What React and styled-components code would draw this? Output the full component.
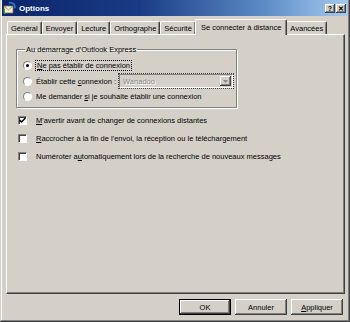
import React from 'react';
import styled, { createGlobalStyle } from 'styled-components';

const GlobalStyle = createGlobalStyle`
  html, body {
    margin: 0;
    padding: 0;
    background: #d4d0c8;
  }
  body {
    font-family: "Liberation Sans", Arial, sans-serif;
    font-size: 7.5px;
    color: #000;
  }
`;

const Window = styled.div`
  width: 350px;
  height: 322px;
  box-sizing: border-box;
  padding: 0 2px 2px 2px;
  background: #d4d0c8;
  display: flex;
  flex-direction: column;
  box-shadow: inset -1px -1px 0 #404040, inset 1px 0 0 #d4d0c8,
    inset -2px -2px 0 #808080, inset 2px 0 0 #fff;
`;

const TitleBar = styled.div`
  height: 16px;
  display: flex;
  align-items: center;
  padding: 0 2px 0 1px;
  background: linear-gradient(90deg, #0a246a 0%, #1a3c86 40%, #5a8ac4 75%, #a6caf0 100%);
  color: #fff;
`;

const TitleText = styled.span`
  font-weight: bold;
  font-size: 8px;
  margin-left: 3px;
  flex: 1;
`;

const CaptionButton = styled.div`
  width: 10px;
  height: 9px;
  margin-left: ${(p) => (p.$gap ? '1px' : '0')};
  background: #d4d0c8;
  box-shadow: inset -1px -1px 0 #404040, inset 1px 1px 0 #fff,
    inset -2px -2px 0 #808080;
  color: #000;
  font-weight: bold;
  font-size: 7px;
  line-height: 9px;
  text-align: center;
`;

const Body = styled.div`
  flex: 1;
  display: flex;
  flex-direction: column;
  padding: 3px 3px 0 4px;
`;

const TabRow = styled.div`
  display: flex;
  align-items: flex-end;
  height: 15px;
  padding-left: 1px;
`;

const Tab = styled.div`
  position: relative;
  z-index: ${(p) => (p.$active ? 2 : 1)};
  height: ${(p) => (p.$active ? '16px' : '13px')};
  margin: ${(p) => (p.$active ? '0 -1px -1px -1px' : '0')};
  padding: 0 ${(p) => (p.$active ? '5px' : '3px')};
  box-sizing: border-box;
  display: flex;
  align-items: center;
  background: #d4d0c8;
  border-top: 1px solid #fff;
  border-left: 1px solid #fff;
  border-right: 1px solid #404040;
  box-shadow: inset -1px 0 0 #808080;
  border-radius: 2px 2px 0 0;
  white-space: nowrap;
`;

const Panel = styled.div`
  height: 260px;
  box-sizing: border-box;
  border-top: 1px solid #fff;
  border-left: 1px solid #fff;
  border-right: 1px solid #404040;
  border-bottom: 1px solid #404040;
  box-shadow: inset -1px -1px 0 #808080;
  padding: 10px 0 0 9px;
`;

const GroupBox = styled.fieldset`
  width: 221px;
  height: 63px;
  box-sizing: border-box;
  margin: 0;
  padding: 3px 0 0 6px;
  border: 1px solid #808080;
  box-shadow: 1px 1px 0 #fff, inset 1px 1px 0 #fff;
`;

const Legend = styled.legend`
  padding: 0 1px;
  margin-left: 2px;
  line-height: 9px;
`;

const OptionRow = styled.div`
  display: flex;
  align-items: center;
  height: ${(p) => p.$h || 15}px;
  white-space: nowrap;
`;

const Radio = styled.div`
  width: 9px;
  height: 9px;
  border-radius: 50%;
  background: #fff;
  flex: none;
  box-sizing: border-box;
  border: 1px solid;
  border-color: #808080 #fff #fff #808080;
  display: flex;
  align-items: center;
  justify-content: center;
  margin-right: 4px;
  &::after {
    content: '';
    width: 3px;
    height: 3px;
    border-radius: 50%;
    background: ${(p) => (p.$checked ? '#000' : 'transparent')};
  }
`;

const Check = styled.div`
  width: 9px;
  height: 9px;
  flex: none;
  background: #fff;
  box-sizing: border-box;
  border: 1px solid;
  border-color: #808080 #fff #fff #808080;
  box-shadow: inset 1px 1px 0 #404040;
  margin-right: 9px;
  display: flex;
  align-items: center;
  justify-content: center;
`;

const Focus = styled.span`
  outline: 1px dotted #000;
  outline-offset: 0;
  padding: 0 1px;
`;

const Combo = styled.div`
  width: 114px;
  height: 14px;
  box-sizing: border-box;
  margin-left: 3px;
  display: flex;
  align-items: center;
  background: #d4d0c8;
  border: 1px solid;
  border-color: #808080 #fff #fff #808080;
  outline: 1px dotted #404040;
  color: #8c8a84;
  padding-left: 3px;
`;

const ComboValue = styled.span`
  flex: 1;
  text-shadow: 1px 1px 0 #fff;
`;

const ComboButton = styled.div`
  width: 11px;
  height: 10px;
  margin-right: 1px;
  background: #d4d0c8;
  box-shadow: inset -1px -1px 0 #404040, inset 1px 1px 0 #fff,
    inset -2px -2px 0 #808080;
  display: flex;
  align-items: center;
  justify-content: center;
`;

const Checks = styled.div`
  display: flex;
  flex-direction: column;
  margin-top: 3px;
  padding-left: 2px;
`;

const ButtonRow = styled.div`
  display: flex;
  justify-content: flex-end;
  gap: 4px;
  margin-top: 5px;
  padding-right: 2px;
`;

const Button = styled.div`
  width: 52px;
  height: 16px;
  box-sizing: border-box;
  display: flex;
  align-items: center;
  justify-content: center;
  background: #d4d0c8;
  border: ${(p) => (p.$default ? '1px solid #000' : 'none')};
  box-shadow: inset -1px -1px 0 #404040, inset 1px 1px 0 #fff,
    inset -2px -2px 0 #808080;
`;

const U = styled.u`
  text-decoration: underline;
`;

const OutlookIcon = () => (
  <svg width="13" height="13" viewBox="0 0 13 13">
    <rect x="1" y="4" width="9" height="7" fill="#f4f0d8" stroke="#807850" strokeWidth="0.8" />
    <path d="M1 4 L5.5 8 L10 4" fill="none" stroke="#807850" strokeWidth="0.8" />
    <path d="M6 1 C9 0 12 2 12 5" fill="none" stroke="#3070d0" strokeWidth="1.6" />
    <path d="M10.5 5 L12 7 L13 4.5 Z" fill="#3070d0" />
    <path d="M2 12 C1 10 1 8 2 7" fill="none" stroke="#40a040" strokeWidth="1.2" />
  </svg>
);

const CheckMark = () => (
  <svg width="7" height="7" viewBox="0 0 7 7">
    <path d="M0.5 3 L2.5 5 L6.5 1" fill="none" stroke="#000" strokeWidth="1.5" />
  </svg>
);

const tabs = [
  'Général',
  'Envoyer',
  'Lecture',
  'Orthographe',
  'Sécurité',
  'Se connecter à distance',
  'Avancées',
];

export default function App() {
  return (
    <>
      <GlobalStyle />
      <Window>
        <TitleBar>
          <OutlookIcon />
          <TitleText>Options</TitleText>
          <CaptionButton>?</CaptionButton>
          <CaptionButton $gap>✕</CaptionButton>
        </TitleBar>
        <Body>
          <TabRow>
            {tabs.map((t) => (
              <Tab key={t} $active={t === 'Se connecter à distance'}>
                {t}
              </Tab>
            ))}
          </TabRow>
          <Panel>
            <GroupBox>
              <Legend>Au démarrage d'Outlook Express</Legend>
              <OptionRow $h={16}>
                <Radio $checked />
                <Focus>
                  <U>N</U>e pas établir de connexion
                </Focus>
              </OptionRow>
              <OptionRow $h={16}>
                <Radio />
                <span>
                  Établir cette <U>c</U>onnexion :
                </span>
                <Combo>
                  <ComboValue>Wanadoo</ComboValue>
                  <ComboButton>
                    <svg width="5" height="3" viewBox="0 0 5 3">
                      <path d="M0 0 H5 L2.5 3 Z" fill="#8c8a84" />
                    </svg>
                  </ComboButton>
                </Combo>
              </OptionRow>
              <OptionRow $h={14}>
                <Radio />
                <span>
                  Me demander <U>s</U>i je souhaite établir une connexion
                </span>
              </OptionRow>
            </GroupBox>
            <Checks>
              <OptionRow $h={18}>
                <Check>
                  <CheckMark />
                </Check>
                <span>
                  <U>M</U>'avertir avant de changer de connexions distantes
                </span>
              </OptionRow>
              <OptionRow $h={18}>
                <Check />
                <span>
                  <U>R</U>accrocher à la fin de l'envoi, la réception ou le téléchargement
                </span>
              </OptionRow>
              <OptionRow $h={18}>
                <Check />
                <span>
                  Numéroter a<U>u</U>tomatiquement lors de la recherche de nouveaux messages
                </span>
              </OptionRow>
            </Checks>
          </Panel>
          <ButtonRow>
            <Button $default>OK</Button>
            <Button>Annuler</Button>
            <Button>
              <span>
                <U>A</U>ppliquer
              </span>
            </Button>
          </ButtonRow>
        </Body>
      </Window>
    </>
  );
}
